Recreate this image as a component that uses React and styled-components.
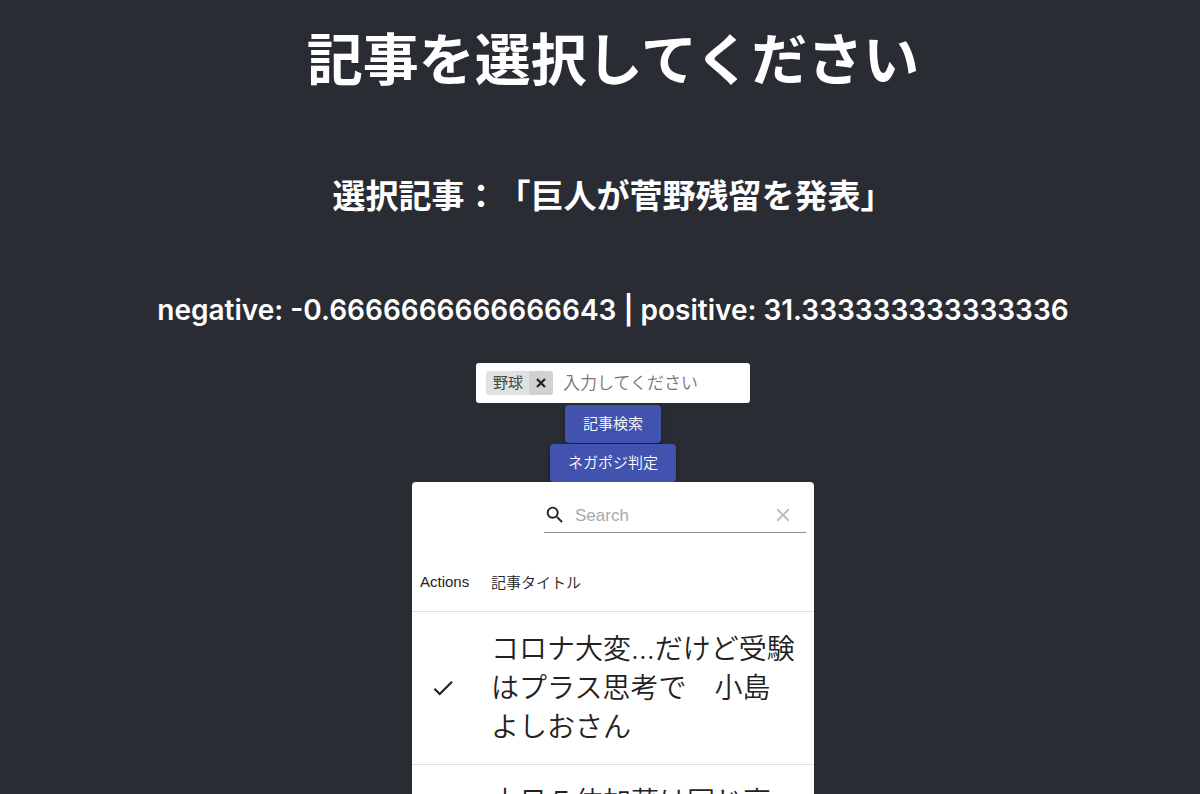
import React, { Component } from 'react';
import styled, { createGlobalStyle } from 'styled-components';

const GlobalStyle = createGlobalStyle`
  * {
    box-sizing: border-box;
  }

  body {
    margin: 0;
    background: #2a2c34;
    font-family: Inter, 'Noto Sans CJK JP', sans-serif;
    text-spacing-trim: space-all;
  }
`;

const Page = styled.main`
  height: 100vh;
  overflow: hidden;
  padding-left: 26px;
  display: flex;
  flex-direction: column;
  align-items: center;
  color: white;
  text-align: center;
`;

const Title = styled.h1`
  margin: 18px 0 0;
  font-size: 56px;
  line-height: 84px;
  font-weight: 700;
`;

const Selected = styled.h2`
  margin: 70px 0 0;
  font-size: 33px;
  line-height: 48px;
  font-weight: 700;
`;

const Score = styled.h3`
  margin: 70px 0 0;
  font-size: 28px;
  line-height: 40px;
  font-weight: 600;
`;

const TagBox = styled.div`
  flex: none;
  width: 274px;
  height: 40px;
  margin: 33px 0 2px;
  padding: 0 10px;
  display: flex;
  align-items: center;
  gap: 10px;
  background: white;
  border-radius: 3px;
`;

const Tag = styled.span`
  flex: none;
  height: 24px;
  display: flex;
  align-items: center;
  overflow: hidden;
  border-radius: 3px;
  background: #e1e1e1;
  color: #444;
  font-size: 15px;
  line-height: 24px;
  padding-left: 7px;
`;

const TagRemove = styled.button`
  width: 24px;
  height: 24px;
  margin-left: 6px;
  padding: 0;
  border: 0;
  display: flex;
  align-items: center;
  justify-content: center;
  background: #d1d1d1;
  color: #222;
`;

const TagInput = styled.input`
  flex: 1;
  min-width: 0;
  padding: 0;
  border: 0;
  outline: 0;
  font-family: inherit;
  font-size: 17px;
  font-weight: 350;
  line-height: 24px;

  &::placeholder {
    color: #757575;
    opacity: 1;
  }
`;

const Buttons = styled.div`
  flex: none;
  display: flex;
  flex-direction: column;
  align-items: center;
  gap: 1px;
`;

const Button = styled.button`
  height: 38px;
  padding: 0 18px;
  border: 0;
  border-radius: 4px;
  background: #4153af;
  box-shadow: 0 2px 4px rgba(0, 0, 0, 0.3);
  color: white;
  font-family: inherit;
  font-size: 15px;
  font-weight: 350;
  line-height: 26px;
`;

const Card = styled.section`
  flex: none;
  width: 402px;
  background: white;
  border-radius: 4px;
  color: #222;
  font-family: 'Liberation Sans', 'Noto Sans CJK JP', sans-serif;
  text-align: left;
`;

const Toolbar = styled.div`
  height: 71px;
  padding: 16px 8px 0 0;
  display: flex;
  justify-content: flex-end;
  align-items: flex-start;
`;

const SearchField = styled.div`
  width: 262px;
  height: 35px;
  display: flex;
  align-items: center;
  border-bottom: 1px solid #8c8c8c;
`;

const SearchInput = styled.input`
  flex: 1;
  min-width: 0;
  height: 32px;
  margin-left: 9px;
  padding: 2px 0 0;
  border: 0;
  outline: 0;
  font-family: inherit;
  font-size: 17px;

  &::placeholder {
    color: #a8a8a8;
    opacity: 1;
  }
`;

const IconButton = styled.button`
  padding: 0;
  border: 0;
  display: flex;
  align-items: center;
  justify-content: center;
  width: ${props => props.$width}px;
  background: none;
  color: ${props => props.$color};
`;

const Table = styled.table`
  width: 100%;
  border-collapse: collapse;
  table-layout: fixed;
`;

const HeadCell = styled.th`
  width: ${props => props.$width || 'auto'};
  height: 58px;
  padding: 0 0 0 8px;
  border-bottom: 1px solid #e0e0e0;
  font-size: 15px;
  font-weight: 350;
  text-align: left;
`;

const Cell = styled.td`
  padding: ${props => (props.$icon ? '0 8px' : '18px 16px 17px 8px')};
  border-bottom: 1px solid #e0e0e0;
  font-size: 28px;
  font-weight: 350;
  line-height: 39px;
  font-family: Inter, 'Noto Sans CJK JP', sans-serif;
`;

const articles = [
  'コロナ大変…だけど受験はプラス思考で　小島よしおさん',
  '本日５位加藤は同じ高校の先輩'
];

const Icon = ({ size, d }) => (
  <svg width={size} height={size} viewBox="0 0 24 24" fill="currentColor">
    <path d={d} />
  </svg>
);

const SEARCH =
  'M15.5 14h-.79l-.28-.27C15.41 12.59 16 11.11 16 9.5 16 5.91 13.09 3 9.5 3S3 5.91 3 9.5 5.91 16 9.5 16c1.61 0 3.09-.59 4.23-1.57l.27.28v.79l5 4.99L20.49 19l-4.99-5zm-6 0C7.01 14 5 11.99 5 9.5S7.01 5 9.5 5 14 7.01 14 9.5 11.99 14 9.5 14z';
const CLEAR =
  'M19 6.41L17.59 5 12 10.59 6.41 5 5 6.41 10.59 12 5 17.59 6.41 19 12 13.41 17.59 19 19 17.59 13.41 12z';
const CHECK = 'M9 16.17L4.83 12l-1.42 1.41L9 19 21 7l-1.41-1.41z';

class App extends Component {
  constructor() {
    super();

    this.state = {
      tags: ['野球'],
      search: '',
      selected: '巨人が菅野残留を発表'
    };
    this.handleSearch = this.handleSearch.bind(this);
  }

  handleSearch(event) {
    this.setState({ search: event.target.value });
  }

  removeTag(tag) {
    this.setState({ tags: this.state.tags.filter(t => t !== tag) });
  }

  render() {
    const { tags, search, selected } = this.state;
    return (
      <Page>
        <GlobalStyle />
        <Title>記事を選択してください</Title>
        <Selected>選択記事：「{selected}」</Selected>
        <Score>negative: -0.6666666666666643 | positive: 31.333333333333336</Score>
        <TagBox>
          {tags.map(tag => (
            <Tag key={tag}>
              {tag}
              <TagRemove
                type="button"
                aria-label={`${tag}を削除`}
                onClick={() => this.removeTag(tag)}
              >
                <svg width="10" height="10" viewBox="0 0 10 10">
                  <path d="M1 1l8 8M9 1l-8 8" stroke="currentColor" strokeWidth="2.2" />
                </svg>
              </TagRemove>
            </Tag>
          ))}
          <TagInput aria-label="キーワード" placeholder="入力してください" />
        </TagBox>
        <Buttons>
          <Button type="button">記事検索</Button>
          <Button type="button">ネガポジ判定</Button>
        </Buttons>
        <Card>
          <Toolbar>
            <SearchField>
              <Icon size={22} d={SEARCH} />
              <SearchInput
                aria-label="Search"
                placeholder="Search"
                value={search}
                onChange={this.handleSearch}
              />
              <IconButton
                type="button"
                aria-label="Clear Search"
                $width={46}
                $color="#bababa"
                onClick={() => this.setState({ search: '' })}
              >
                <Icon size={22} d={CLEAR} />
              </IconButton>
            </SearchField>
          </Toolbar>
          <Table>
            <thead>
              <tr>
                <HeadCell $width="71px">Actions</HeadCell>
                <HeadCell>記事タイトル</HeadCell>
              </tr>
            </thead>
            <tbody>
              {articles
                .filter(title => title.includes(search))
                .map(title => (
                  <tr key={title}>
                    <Cell $icon>
                      <IconButton
                        type="button"
                        aria-label="選択"
                        $width={46}
                        $color="#222"
                        onClick={() => this.setState({ selected: title })}
                      >
                        <Icon size={26} d={CHECK} />
                      </IconButton>
                    </Cell>
                    <Cell>{title}</Cell>
                  </tr>
                ))}
            </tbody>
          </Table>
        </Card>
      </Page>
    );
  }
}

export default App;
